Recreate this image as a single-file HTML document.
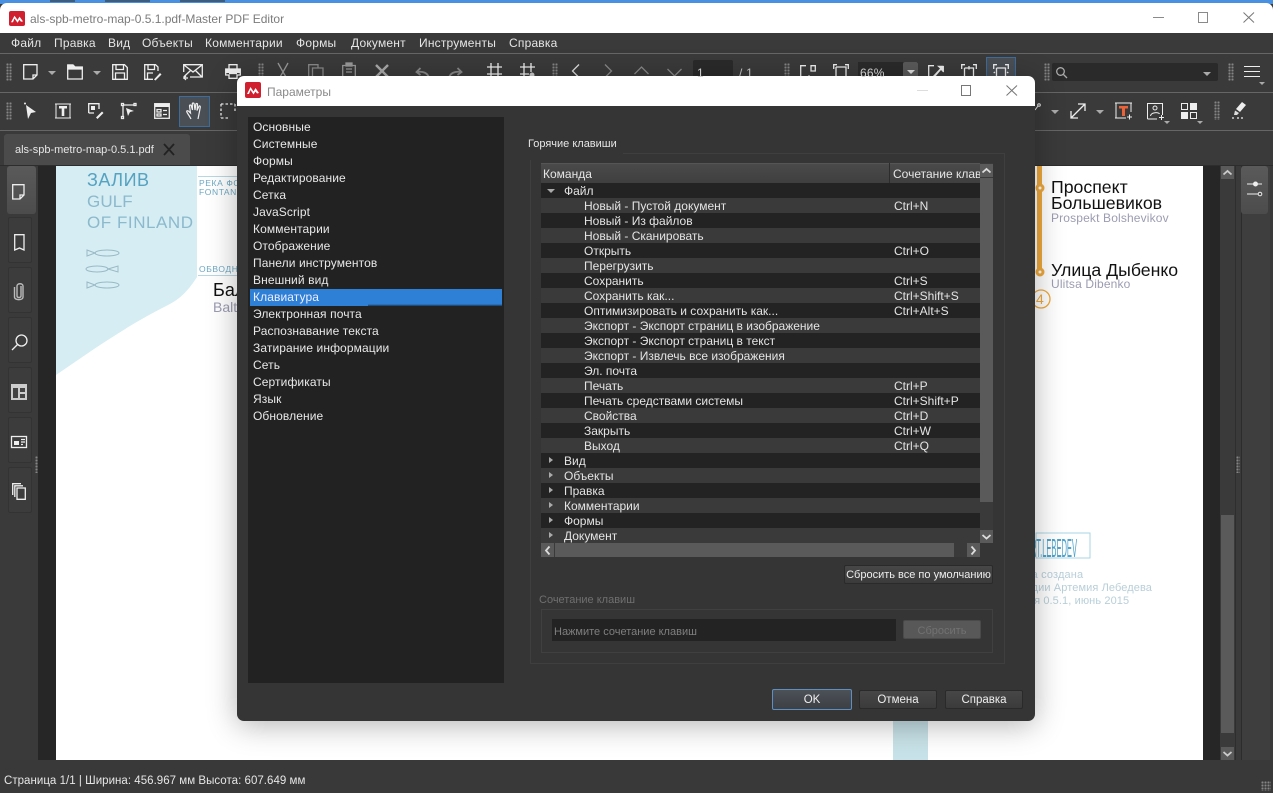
<!DOCTYPE html>
<html><head><meta charset="utf-8"><style>
*{box-sizing:border-box}
html,body{margin:0;padding:0;width:1273px;height:793px;overflow:hidden;background:#3a3a3a;font-family:"Liberation Sans",sans-serif;font-size:12px;color:#e6e6e6}
.a,.t,svg.i{position:absolute}
.t{white-space:nowrap;line-height:16px;letter-spacing:.2px}
svg.i{fill:none;stroke:#eee;stroke-width:1.3;overflow:visible}
.grip{position:absolute;width:6px;background-image:radial-gradient(#858585 1px,transparent 1.2px);background-size:3px 3px}
.drop{position:absolute;width:0;height:0;border-left:4px solid transparent;border-right:4px solid transparent;border-top:4px solid #aaa}
.side{position:absolute;left:8px;width:24px;height:46px;background:#3c3c3c;border:1px solid #333;border-radius:2px}
.btn{position:absolute;background:linear-gradient(#474747,#3b3b3b);border:1px solid #2a2a2a;border-radius:2px;text-align:center;color:#eee;line-height:19px;font-size:11.5px}
.rows>div{height:15px;line-height:17px;position:relative;white-space:nowrap;color:#e4e4e4}
.rows>div:nth-child(odd){background:#232323}
.rows>div:nth-child(even){background:#3a3a3a}
.rows b{font-weight:normal;position:absolute;left:43px}
.rows u{text-decoration:none;position:absolute;left:353px}
.rows i{position:absolute;left:23px;font-style:normal}
.rows .c{position:absolute;left:8px;top:4px;width:0;height:0;border-top:3.5px solid transparent;border-bottom:3.5px solid transparent;border-left:4px solid #aaa}
.rows .o{position:absolute;left:6px;top:6px;width:0;height:0;border-left:4px solid transparent;border-right:4px solid transparent;border-top:4px solid #aaa}
.list div{height:17px;line-height:17px;padding-left:5px;letter-spacing:.1px;color:#e8e8e8;white-space:nowrap;position:relative}
.sb{position:absolute;background:#5a5a5a}
.pg{position:absolute;white-space:nowrap;line-height:1}
</style></head><body>

<!-- desktop sliver -->
<div class="a" style="left:0;top:0;width:1273px;height:4px;background:#4a90e0"></div>
<div class="a" style="left:50px;top:0;width:25px;height:2px;background:#3b5d80"></div>
<div class="a" style="left:105px;top:0;width:45px;height:2px;background:#3b5d80"></div>
<div class="a" style="left:180px;top:0;width:45px;height:2px;background:#3b5d80"></div>

<!-- title bar -->
<div class="a" style="left:0;top:3px;width:1273px;height:30px;background:#fff;border-radius:7px 7px 0 0"></div>
<svg class="i" style="left:9px;top:11px;stroke:none" width="16" height="15" viewBox="0 0 16 16" preserveAspectRatio="none"><rect width="16" height="16" rx="2" fill="#d0202f"/><path d="M2 12 5.500 5l3 4.500L10.500 6 14 11l-2 .5-1.500-2-2 3-3-4.500L4 12z" fill="#fff"/></svg>
<div class="t" style="left:30px;top:11px;color:#7b7b7b;letter-spacing:0">als-spb-metro-map-0.5.1.pdf-Master PDF Editor</div>
<svg class="i" style="left:1153px;top:12px;stroke:#8a8a8a;stroke-width:1" width="12" height="12"><path d="M0 5.500H11"/></svg>
<svg class="i" style="left:1198px;top:12px;stroke:#8a8a8a;stroke-width:1" width="11" height="11"><rect x=".5" y=".5" width="9" height="10"/></svg>
<svg class="i" style="left:1243px;top:12px;stroke:#777;stroke-width:1" width="12" height="11"><path d="M.5.500l10.500 10M11 .5.500 10.500"/></svg>

<!-- menu -->
<div class="a" style="left:0;top:33px;width:1273px;height:732px;background:#3a3a3a"></div>
<div class="t" style="left:11px;top:35px">Файл</div>
<div class="t" style="left:54px;top:35px">Правка</div>
<div class="t" style="left:108px;top:35px">Вид</div>
<div class="t" style="left:142px;top:35px">Объекты</div>
<div class="t" style="left:205px;top:35px">Комментарии</div>
<div class="t" style="left:296px;top:35px">Формы</div>
<div class="t" style="left:351px;top:35px">Документ</div>
<div class="t" style="left:419px;top:35px">Инструменты</div>
<div class="t" style="left:509px;top:35px">Справка</div>
<div class="a" style="left:0;top:53px;width:1273px;height:1px;background:#666"></div>
<div class="a" style="left:0;top:92px;width:1273px;height:1px;background:#666"></div>
<div class="a" style="left:0;top:130px;width:1273px;height:1px;background:#666"></div>

<!-- toolbar 1 -->
<div class="grip" style="left:6px;top:63px;height:18px"></div>
<svg class="i" style="left:23px;top:64px" width="15" height="16"><path d="M.7.700H14V11L10 15H.7zM14 11H10V15" /></svg>
<div class="drop" style="left:48px;top:71px"></div>
<svg class="i" style="left:67px;top:64px" width="16" height="16"><path d="M.7 15V1H6L8 3H15.300V15z"/><path d="M1 1H6L8 3.500H15V5H1z" fill="#eee"/></svg>
<div class="drop" style="left:93px;top:71px"></div>
<svg class="i" style="left:112px;top:64px" width="16" height="16"><path d="M.7.700H12.500L15.300 3.500V15.300H.7zM4 1V5.500H11.500V1M3.500 15V9H12.500V15"/></svg>
<svg class="i" style="left:144px;top:64px" width="18" height="17"><path d="M9 15.300H.7V.700H11.500L14 3V7M4 1V5.500H10.500V1M3.500 15V9H9"/><path d="M10 15.500 16 9l1.500 1.500L11.500 16.500z" fill="#eee" stroke="none"/></svg>
<svg class="i" style="left:183px;top:64px" width="20" height="18"><path d="M.7 8V.7H19.300V13H7M.7.700 10 8 19.300.7M.7 13 7.500 6.500M19 13 12.500 6.500"/><path d="M0 14H5M3 12 1 14l2 2" stroke-width="1.200"/></svg>
<svg class="i" style="left:225px;top:64px" width="16" height="15"><path d="M4 5V.7H12V5M.7 5H15.300V11H12V14.300H4V11H.7zM4 9.500H12"/><path d="M1 5H15V9H1z" fill="#eee" stroke="none"/></svg>
<div class="grip" style="left:258px;top:63px;height:13px"></div>
<svg class="i" style="left:277px;top:63px;stroke:#999" width="12" height="14"><path d="M1 0 6 9M11 0 6 9M6 9 3 14M6 9 9 14"/></svg>
<svg class="i" style="left:308px;top:64px;stroke:#888" width="16" height="13"><path d="M.7 13V.7H10V4M4.500 13V4H15V13"/></svg>
<svg class="i" style="left:342px;top:63px;stroke:#999" width="14" height="13"><path d="M.7 13V2.500H13.300V13M4 6H10M4 9H10" /><rect x="4" y="0" width="6" height="3" fill="#999"/></svg>
<svg class="i" style="left:375px;top:64px;stroke:#aaa;stroke-width:2.400" width="14" height="14"><path d="M1 1 13 13M13 1 1 13"/></svg>
<svg class="i" style="left:415px;top:67px;stroke:#888;stroke-width:1.800" width="15" height="11"><path d="M14 11C13 6 8 4 2 5M5.500 1 1.500 5l4 3"/></svg>
<svg class="i" style="left:448px;top:67px;stroke:#888;stroke-width:1.800" width="15" height="11"><path d="M1 11C2 6 7 4 13 5M9.500 1l4 4-4 3"/></svg>
<svg class="i" style="left:487px;top:63px" width="15" height="14"><path d="M4 0V14M11 0V14M0 4H15M0 11H15"/></svg>
<svg class="i" style="left:520px;top:63px" width="16" height="15"><path d="M4 0V14M11 0V9M0 4H15M0 11H9"/><circle cx="12" cy="12" r="2.500" fill="#ccc" stroke="none"/></svg>
<div class="grip" style="left:552px;top:63px;height:13px"></div>
<svg class="i" style="left:571px;top:64px;stroke:#ddd" width="9" height="14"><path d="M8 .5 1.500 7 8 13.500"/></svg>
<svg class="i" style="left:604px;top:64px;stroke:#888" width="9" height="14"><path d="M1 .5 7.500 7 1 13.500"/></svg>
<svg class="i" style="left:634px;top:66px;stroke:#888" width="15" height="9"><path d="M.5 8 7.500 1 14.500 8"/></svg>
<svg class="i" style="left:667px;top:68px;stroke:#888" width="15" height="9"><path d="M.5 1 7.500 8 14.500 1"/></svg>
<div class="a" style="left:693px;top:60px;width:40px;height:20px;background:#2a2a2a;border-radius:2px"></div>
<div class="t" style="left:697px;top:65px;color:#ccc;z-index:1">1</div>
<div class="t" style="left:739px;top:65px;color:#ccc">/ 1</div>
<div class="grip" style="left:784px;top:63px;height:13px"></div>
<svg class="i" style="left:800px;top:65px" width="16" height="16"><path d="M6 .7H.7V14M11 .7H15.300V6H11z"/><path d="M4 15 9 10l1.500 1.500L6 16z" fill="#eee" stroke="none"/></svg>
<svg class="i" style="left:833px;top:64px" width="16" height="17"><path d="M.7 5V.7H4M12 .7H15.300V5M3 3H13V17M3 3V17"/></svg>
<div class="a" style="left:858px;top:62px;width:60px;height:18px;background:#2a2a2a"></div>
<div class="t" style="left:860px;top:65px;color:#ccc;z-index:1">66%</div>
<div class="a" style="left:903px;top:62px;width:15px;height:20px;background:#5a5a5a;border-radius:2px"></div>
<div class="drop" style="left:907px;top:70px;border-top-color:#ddd"></div>
<svg class="i" style="left:928px;top:65px" width="16" height="16"><path d="M6 .7H.7V15H5M15.300 1V7M11 15H15"/><path d="M5 11 12 3.500 9 .7H15.500V7.500L13 5 7 12z" fill="#eee" stroke="none"/></svg>
<svg class="i" style="left:961px;top:64px" width="16" height="17"><path d="M.7 5V.7H4M12 .7H15.300V5M3.500 4H12.500V17M3.500 4V17M8 2V5.500"/></svg>
<div class="a" style="left:986px;top:57px;width:30px;height:30px;background:#4a4f55;border:1px solid #3d6d9c"></div>
<svg class="i" style="left:993px;top:64px" width="16" height="17"><path d="M.7 5V.7H4M12 .7H15.300V5M3.500 4H12.500V17M3.500 4V17M.7 9 2 8M15.300 9 14 8"/></svg>
<div class="grip" style="left:1044px;top:63px;height:18px"></div>
<div class="a" style="left:1052px;top:63px;width:166px;height:18px;background:#2a2a2a;border-radius:2px"></div>
<svg class="i" style="left:1056px;top:67px;stroke:#aaa;stroke-width:1.300" width="11" height="11"><circle cx="4.500" cy="4.500" r="3.800"/><path d="M7.500 7.500 11 11"/></svg>
<div class="drop" style="left:1203px;top:72px"></div>
<div class="grip" style="left:1228px;top:63px;height:18px"></div>
<svg class="i" style="left:1244px;top:66px;stroke-width:1" width="16" height="11"><path d="M0 .5H16M0 5.500H16M0 10.500H16"/></svg>
<div class="drop" style="left:1259px;top:82px;border-left-width:3px;border-right-width:3px;border-top-width:3px"></div>

<!-- toolbar 2 -->
<div class="grip" style="left:6px;top:102px;height:18px"></div>
<svg class="i" style="left:24px;top:102px;stroke:none" width="13" height="17"><path d="M2 3 12 10 7 11 4 17z" fill="#eee"/><circle cx="1" cy="1.500" r="1" fill="#eee"/></svg>
<svg class="i" style="left:55px;top:103px;stroke-width:1" width="16" height="16"><path d="M1 .5V15.500M15 .5V15.500M0 1H16M0 15H16"/><path d="M4 3H12V5.500H9.300V13H6.700V5.500H4z" fill="#eee" stroke="none"/></svg>
<svg class="i" style="left:88px;top:103px" width="16" height="16"><path d="M.7 10V.7H11V6M.7 10H6"/><rect x="3" y="3" width="4" height="4" fill="#eee" stroke="none"/><path d="M8 14.500 14 8.500l1.500 1.500-6 6z" fill="#eee" stroke="none"/></svg>
<svg class="i" style="left:121px;top:103px" width="16" height="16"><path d="M2 2H14M2 2V14"/><rect x=".5" y=".5" width="2" height="2" fill="#333"/><rect x="13" y=".5" width="2" height="2" fill="#333"/><rect x=".5" y="13.500" width="2" height="2" fill="#333"/><path d="M5 5 13 8 9 9 7 13z" fill="#eee" stroke="none"/></svg>
<svg class="i" style="left:154px;top:103px" width="16" height="16"><rect x=".7" y=".7" width="14.600" height="14.600"/><path d="M1 1H15V4H1z" fill="#eee" stroke="none"/><path d="M3 6.500H7V9H3zM3 11H7V13H3z"/><path d="M9 7.500H13M9 11.500H13"/></svg>
<div class="a" style="left:179px;top:96px;width:31px;height:31px;background:#4a4f55;border:1px solid #3d6d9c"></div>
<svg class="i" style="left:186px;top:102px;stroke:#eee;stroke-width:1.200" width="17" height="18"><path d="M5 17C3 13 1 11 .7 9.500c0-1 1.300-1 2-.2L4.500 11 3.500 4c0-1.300 1.500-1.300 1.800 0L6.500 8 6.300 2c0-1.300 1.700-1.300 1.900 0L9 8 9.800 2.300c.2-1.200 1.800-1 1.700.3L11 8.500l1.800-4c.4-1 1.700-.6 1.500.6L13 12l-1 5"/></svg>
<svg class="i" style="left:220px;top:103px;stroke-dasharray:2.500 2" width="16" height="16"><path d="M1 1H15M1 1V15M1 15H8M15 1V8"/></svg>
<svg class="i" style="left:1035px;top:103px;stroke-width:1" width="6" height="7"><path d="M0 7 3 3"/><circle cx="4" cy="2" r="1.300"/></svg>
<div class="drop" style="left:1051px;top:110px"></div>
<svg class="i" style="left:1070px;top:103px" width="16" height="16"><path d="M1 15 15 1M8 1H15V8M1 8V15H8"/></svg>
<div class="drop" style="left:1096px;top:110px"></div>
<svg class="i" style="left:1115px;top:102px;stroke-width:1" width="18" height="18"><path d="M1 .5V16M16 .5V10M0 1H17M0 16H11M12 15H17M14.500 12.500V17.500"/><path d="M4 4H13V6.500H10V14H7V6.500H4z" fill="#e8623a" stroke="none"/></svg>
<svg class="i" style="left:1147px;top:103px;stroke-width:1" width="18" height="18"><path d="M.5 16V.5H15.500V12M.5 16H10"/><circle cx="8" cy="5" r="2"/><path d="M3.500 13C4 9 12 9 12.500 11M12 14.500H17M14.500 12V17"/></svg>
<div class="drop" style="left:1164px;top:121px;border-left-width:3px;border-right-width:3px;border-top-width:3px"></div>
<svg class="i" style="left:1181px;top:103px;stroke-width:1" width="16" height="16"><rect x=".5" y=".5" width="6" height="6"/><rect x="9" y="0" width="7" height="7" fill="#eee" stroke="none"/><rect x="0" y="9" width="7" height="7" fill="#eee" stroke="none"/><rect x="9.500" y="9.500" width="6" height="6"/></svg>
<div class="drop" style="left:1197px;top:121px;border-left-width:3px;border-right-width:3px;border-top-width:3px"></div>
<div class="grip" style="left:1214px;top:101px;height:19px"></div>
<svg class="i" style="left:1231px;top:101px;stroke:none" width="15" height="17"><path d="M5 8 11 1l4 3-6 7z" fill="#eee"/><path d="M4 9.500 8 12l-2 2H3z" fill="#ddd"/><path d="M1 17H3M6 17H8M10 17H12" stroke="#eee"/></svg>

<!-- tab bar -->
<div class="a" style="left:4px;top:134px;width:186px;height:31px;background:#4b4b4b;border-radius:3px 3px 0 0"></div>
<div class="t" style="left:15px;top:142px;letter-spacing:0;font-size:11px">als-spb-metro-map-0.5.1.pdf</div>
<svg class="i" style="left:163px;top:143px;stroke:#222;stroke-width:1.800" width="12" height="13"><path d="M1 1 11 12M11 1 1 12"/></svg>
<div class="a" style="left:0;top:165px;width:1273px;height:1px;background:#2d2d2d"></div>

<!-- left strip -->
<div class="a" style="left:7px;top:166px;width:29px;height:48px;background:linear-gradient(#5a5a5a,#4c4c4c);border-radius:3px"></div>
<div class="side" style="top:217px"></div>
<div class="side" style="top:267px"></div>
<div class="side" style="top:317px"></div>
<div class="side" style="top:367px"></div>
<div class="side" style="top:417px"></div>
<div class="side" style="top:467px"></div>
<svg class="i" style="left:12px;top:184px" width="13" height="16"><path d="M.7.700H12V11L8 15H.7zM12 11H8V15"/></svg>
<svg class="i" style="left:14px;top:234px" width="11" height="17"><path d="M.7.700H10V16L5.500 14 .7 16z"/></svg>
<svg class="i" style="left:13px;top:283px;stroke:#bbb;stroke-width:1.400" width="12" height="18"><path d="M8 3V13C8 15 4 15 4 13V3C4 0 10 0 10 3V14C10 17.500 1.500 17.500 1.500 14V4"/></svg>
<svg class="i" style="left:11px;top:334px" width="17" height="17"><circle cx="10.500" cy="6.500" r="5.500"/><path d="M6.500 10.500 1 16"/></svg>
<svg class="i" style="left:11px;top:384px;stroke:none" width="16" height="16"><rect width="16" height="16" fill="#ccc"/><rect x="2" y="4" width="5" height="10" fill="#444"/><rect x="9" y="4" width="5" height="4" fill="#444"/><rect x="9" y="10" width="5" height="4" fill="#444"/></svg>
<svg class="i" style="left:11px;top:436px" width="16" height="12" stroke-width="1"><rect x=".5" y=".5" width="15" height="11"/><rect x="3" y="5" width="5" height="4" fill="#eee" stroke="none"/><path d="M10 3.500H14M10 6H14M10 8.500H12"/></svg>
<svg class="i" style="left:12px;top:483px" width="14" height="17"><path d="M.7 12V.7H9M2.800 14V2.800H11M5 16.300V5H13.300V16.300z"/></svg>
<div class="grip" style="left:35px;top:456px;height:17px;width:4px"></div>

<!-- document area -->
<div class="a" style="left:38px;top:166px;width:1182px;height:594px;background:#262626"></div>
<div class="a" style="left:56px;top:166px;width:1147px;height:594px;background:#fff;overflow:hidden">
  <svg class="a" style="left:0;top:0" width="1147" height="594"><path d="M0 0H141V111C132 125 124 133 112 139 70 160 35 185 0 209z" fill="#d5edf3"/><rect x="142" y="10" width="60" height="1" fill="#b7d7e3"/><rect x="142" y="109" width="60" height="1" fill="#b7d7e3"/><rect x="837" y="554" width="35" height="40" fill="#c7e2e8"/><rect x="981" y="0" width="5" height="106" fill="#f0a93c"/>
  <g fill="none" stroke="#9ab9c6"><ellipse cx="51" cy="87" rx="12" ry="3"/><path d="M39 87 31 84V90z"/><ellipse cx="41" cy="103" rx="11" ry="3"/><path d="M52 103 62 100V106z"/><ellipse cx="51" cy="119" rx="12" ry="3"/><path d="M39 119 31 116V122z"/></g>
  <circle cx="984" cy="22" r="3" fill="#fff" stroke="#f0a93c" stroke-width="3"/><circle cx="984" cy="106" r="3" fill="#fff" stroke="#f0a93c" stroke-width="3"/><circle cx="985" cy="133" r="9" fill="#fff" stroke="#f0a93c" stroke-width="1.300"/><rect x="980" y="367" width="54" height="25" fill="#fff" stroke="#a9d5e6"/></svg>
  <div class="pg" style="left:31px;top:5px;font-size:18px;color:#55a2c1;letter-spacing:.5px">ЗАЛИВ</div>
  <div class="pg" style="left:31px;top:27px;font-size:17px;color:#8cb9cd;letter-spacing:.1px">GULF</div>
  <div class="pg" style="left:31px;top:48px;font-size:17px;color:#8cb9cd;letter-spacing:.55px">OF FINLAND</div>
  <div class="pg" style="left:143px;top:13px;font-size:8.500px;color:#6da8c4;letter-spacing:.6px">РЕКА ФОНТАНКА</div>
  <div class="pg" style="left:143px;top:22px;font-size:8.500px;color:#6da8c4;letter-spacing:.6px">FONTANKA</div>
  <div class="pg" style="left:143px;top:99px;font-size:8.500px;color:#6da8c4;letter-spacing:.6px">ОБВОДНЫЙ</div>
  <div class="pg" style="left:157px;top:115px;font-size:18px;color:#111">Балтийская</div>
  <div class="pg" style="left:157px;top:134px;font-size:14px;color:#9c9cb2">Baltiyskaya</div>
  <div class="pg" style="left:995px;top:13px;font-size:17.700px;color:#111">Проспект</div>
  <div class="pg" style="left:995px;top:29px;font-size:17.700px;color:#111">Большевиков</div>
  <div class="pg" style="left:995px;top:46px;font-size:12px;color:#9c9cb2;letter-spacing:.15px">Prospekt Bolshevikov</div>
  <div class="pg" style="left:995px;top:96px;font-size:17.700px;color:#111">Улица Дыбенко</div>
  <div class="pg" style="left:995px;top:112px;font-size:12px;color:#9c9cb2;letter-spacing:.15px">Ulitsa Dibenko</div>
  <div class="pg" style="left:980px;top:126px;font-size:14px;color:#f0a93c">4</div>
  <div class="pg" style="left:970px;top:369px;font-size:26px;color:#4fa3cc;transform:scaleX(.29);transform-origin:0 0">ART.LEBEDEV</div>
  <div class="pg" style="left:948px;top:404px;font-size:11px;color:#b8cfd9;letter-spacing:.15px">Схема создана</div>
  <div class="pg" style="left:948px;top:417px;font-size:11px;color:#b8cfd9;letter-spacing:.1px">в Студии Артемия Лебедева</div>
  <div class="pg" style="left:948px;top:430px;font-size:11px;color:#b8cfd9;letter-spacing:.1px">версия 0.5.1, июнь 2015</div>
</div>

<!-- doc scrollbar -->
<div class="a" style="left:1220px;top:166px;width:15px;height:594px;background:#3a3a3a"></div>
<div class="sb" style="left:1221px;top:166px;width:13px;height:13px"></div>
<svg class="i" style="left:1223px;top:170px;stroke:#ccc;stroke-width:1.800" width="9" height="5"><path d="M.5 4.500 4.500 1l4 3.500"/></svg>
<div class="sb" style="left:1221px;top:515px;width:13px;height:218px"></div>
<div class="sb" style="left:1221px;top:747px;width:13px;height:13px"></div>
<svg class="i" style="left:1223px;top:751px;stroke:#ccc;stroke-width:1.800" width="9" height="5"><path d="M.5 1 4.500 4.500l4-3.500"/></svg>
<div class="a" style="left:1235px;top:166px;width:1px;height:594px;background:#2e2e2e"></div>
<div class="a" style="left:1241px;top:166px;width:29px;height:594px;border-left:1px solid #2c2c2c;background:#3e3e3e"></div>
<div class="a" style="left:1241px;top:166px;width:27px;height:48px;background:linear-gradient(#5a5a5a,#4c4c4c);border-radius:3px"></div>
<svg class="i" style="left:1247px;top:181px;stroke-width:1" width="16" height="16"><path d="M0 3H15M0 13H11"/><circle cx="8.500" cy="3" r="2" fill="#eee"/><circle cx="13" cy="13" r="1.800" fill="#4c4c4c"/></svg>
<div class="grip" style="left:1236px;top:456px;height:17px;width:4px"></div>

<!-- status bar -->
<div class="a" style="left:0;top:760px;width:1273px;height:33px;background:#393939"></div>
<div class="t" style="left:4px;top:773px;letter-spacing:.03px;font-size:11.500px">Страница 1/1 | Ширина: 456.967 мм Высота: 607.649 мм</div>
<div class="grip" style="left:1261px;top:781px;width:10px;height:10px"></div>

<!-- dialog -->
<div class="a" style="left:237px;top:76px;width:798px;height:645px;background:#353535;border-radius:7px;box-shadow:0 4px 30px rgba(0,0,0,.3);overflow:hidden">
  <div class="a" style="left:0;top:0;width:798px;height:30px;background:#fff"></div>
  <svg class="i" style="left:8px;top:6px;stroke:none" width="16" height="16" viewBox="0 0 16 16"><rect width="16" height="16" rx="2" fill="#d0202f"/><path d="M2 12 5.500 5l3 4.500L10.500 6 14 11l-2 .5-1.500-2-2 3-3-4.500L4 12z" fill="#fff"/></svg>
  <div class="t" style="left:30px;top:8px;color:#8a8a8a;letter-spacing:0">Параметры</div>
  <svg class="i" style="left:680px;top:9px;stroke:#ddd;stroke-width:1" width="12" height="12"><path d="M0 5.500H11"/></svg>
  <svg class="i" style="left:724px;top:9px;stroke:#777;stroke-width:1" width="11" height="11"><rect x=".5" y=".5" width="9" height="10"/></svg>
  <svg class="i" style="left:769px;top:9px;stroke:#777;stroke-width:1" width="12" height="11"><path d="M.5.500l10.500 10M11 .5.500 10.500"/></svg>

  <!-- list -->
  <div class="a list" style="left:11px;top:41px;width:256px;height:566px;background:#222;padding:2px 0 0 0">
    <div>Основные</div><div>Системные</div><div>Формы</div><div>Редактирование</div><div>Сетка</div><div>JavaScript</div><div>Комментарии</div><div>Отображение</div><div>Панели инструментов</div><div>Внешний вид</div><div style="background:#2e7fd6;margin:0 2px;padding-left:3px;color:#eef">Клавиатура<span class="a" style="left:118px;right:0;bottom:0;height:2px;background:linear-gradient(#2e7fd6,#1d3a5c)"></span></div><div>Электронная почта</div><div>Распознавание текста</div><div>Затирание информации</div><div>Сеть</div><div>Сертификаты</div><div>Язык</div><div>Обновление</div>
  </div>

  <!-- group -->
  <div class="a" style="left:293px;top:77px;width:475px;height:511px;border:1px solid #3f3f3f"></div>
  <div class="a" style="left:291px;top:72px;width:95px;height:12px;background:#353535"></div>
  <div class="t" style="left:291px;top:60px;letter-spacing:0;font-size:11px">Горячие клавиши</div>

  <!-- table -->
  <div class="a" style="left:304px;top:87px;width:452px;height:380px;background:#3a3a3a"></div>
  <div class="a" style="left:304px;top:87px;width:439px;height:20px;background:linear-gradient(#4a4a4a,#3f3f3f);border-top:1px solid #555"></div>
  <div class="a" style="left:652px;top:87px;width:1px;height:20px;background:#2c2c2c"></div>
  <div class="t" style="left:306px;top:90px;letter-spacing:0">Команда</div>
  <div class="t" style="left:656px;top:90px;width:87px;overflow:hidden;letter-spacing:0">Сочетание клавиш</div>
  <div class="a rows" style="left:304px;top:107px;width:439px;height:360px;overflow:hidden">
    <div><span class="o"></span><i>Файл</i></div>
    <div><b>Новый - Пустой документ</b><u>Ctrl+N</u></div>
    <div><b>Новый - Из файлов</b></div>
    <div><b>Новый - Сканировать</b></div>
    <div><b>Открыть</b><u>Ctrl+O</u></div>
    <div><b>Перегрузить</b></div>
    <div><b>Сохранить</b><u>Ctrl+S</u></div>
    <div><b>Сохранить как...</b><u>Ctrl+Shift+S</u></div>
    <div><b>Оптимизировать и сохранить как...</b><u>Ctrl+Alt+S</u></div>
    <div><b>Экспорт - Экспорт страниц в изображение</b></div>
    <div><b>Экспорт - Экспорт страниц в текст</b></div>
    <div><b>Экспорт - Извлечь все изображения</b></div>
    <div><b>Эл. почта</b></div>
    <div><b>Печать</b><u>Ctrl+P</u></div>
    <div><b>Печать средствами системы</b><u>Ctrl+Shift+P</u></div>
    <div><b>Свойства</b><u>Ctrl+D</u></div>
    <div><b>Закрыть</b><u>Ctrl+W</u></div>
    <div><b>Выход</b><u>Ctrl+Q</u></div>
    <div><span class="c"></span><i>Вид</i></div>
    <div><span class="c"></span><i>Объекты</i></div>
    <div><span class="c"></span><i>Правка</i></div>
    <div><span class="c"></span><i>Комментарии</i></div>
    <div><span class="c"></span><i>Формы</i></div>
    <div><span class="c"></span><i>Документ</i></div>
  </div>
  <!-- table v scroll -->
  <div class="sb" style="left:743px;top:88px;width:13px;height:13px"></div>
  <svg class="i" style="left:745px;top:92px;stroke:#ddd;stroke-width:1.800" width="9" height="5"><path d="M.5 4.500 4.500 1l4 3.500"/></svg>
  <div class="sb" style="left:743px;top:102px;width:13px;height:324px"></div>
  <div class="sb" style="left:743px;top:454px;width:13px;height:13px"></div>
  <svg class="i" style="left:745px;top:458px;stroke:#ddd;stroke-width:1.800" width="9" height="5"><path d="M.5 1 4.500 4.500l4-3.500"/></svg>
  <!-- table h scroll -->
  <div class="a" style="left:304px;top:467px;width:439px;height:14px;background:#3a3a3a"></div>
  <div class="sb" style="left:304px;top:467px;width:13px;height:14px"></div>
  <svg class="i" style="left:308px;top:470px;stroke:#ddd;stroke-width:1.800" width="5" height="9"><path d="M4.500.5 1 4.500l3.500 4"/></svg>
  <div class="sb" style="left:318px;top:467px;width:399px;height:14px"></div>
  <div class="sb" style="left:730px;top:467px;width:13px;height:14px"></div>
  <svg class="i" style="left:734px;top:470px;stroke:#ddd;stroke-width:1.800" width="5" height="9"><path d="M.5.500 4 4.500l-3.500 4"/></svg>

  <div class="btn" style="left:607px;top:489px;width:149px;height:19px;font-size:11px;white-space:nowrap">Сбросить все по умолчанию</div>

  <div class="t" style="left:302px;top:516px;color:#6f6f6f;letter-spacing:0;font-size:11px">Сочетание клавиш</div>
  <div class="a" style="left:304px;top:533px;width:452px;height:44px;border:1px solid #404040"></div>
  <div class="a" style="left:315px;top:543px;width:344px;height:22px;background:#232323"></div>
  <div class="t" style="left:317px;top:548px;color:#7f7f7f;letter-spacing:0;font-size:11px">Нажмите сочетание клавиш</div>
  <div class="a" style="left:666px;top:544px;width:78px;height:19px;background:#585858;border:1px solid #4a4a4a;border-radius:2px;text-align:center;line-height:20px;color:#727272;font-size:11px">Сбросить</div>

  <div class="btn" style="left:535px;top:613px;width:80px;height:21px;background:linear-gradient(#4c5158,#3d4045);border:1px solid #5e8fc0;line-height:21px">OK</div>
  <div class="btn" style="left:622px;top:614px;width:78px;height:19px">Отмена</div>
  <div class="btn" style="left:708px;top:614px;width:78px;height:19px">Справка</div>
</div>
</body></html>
